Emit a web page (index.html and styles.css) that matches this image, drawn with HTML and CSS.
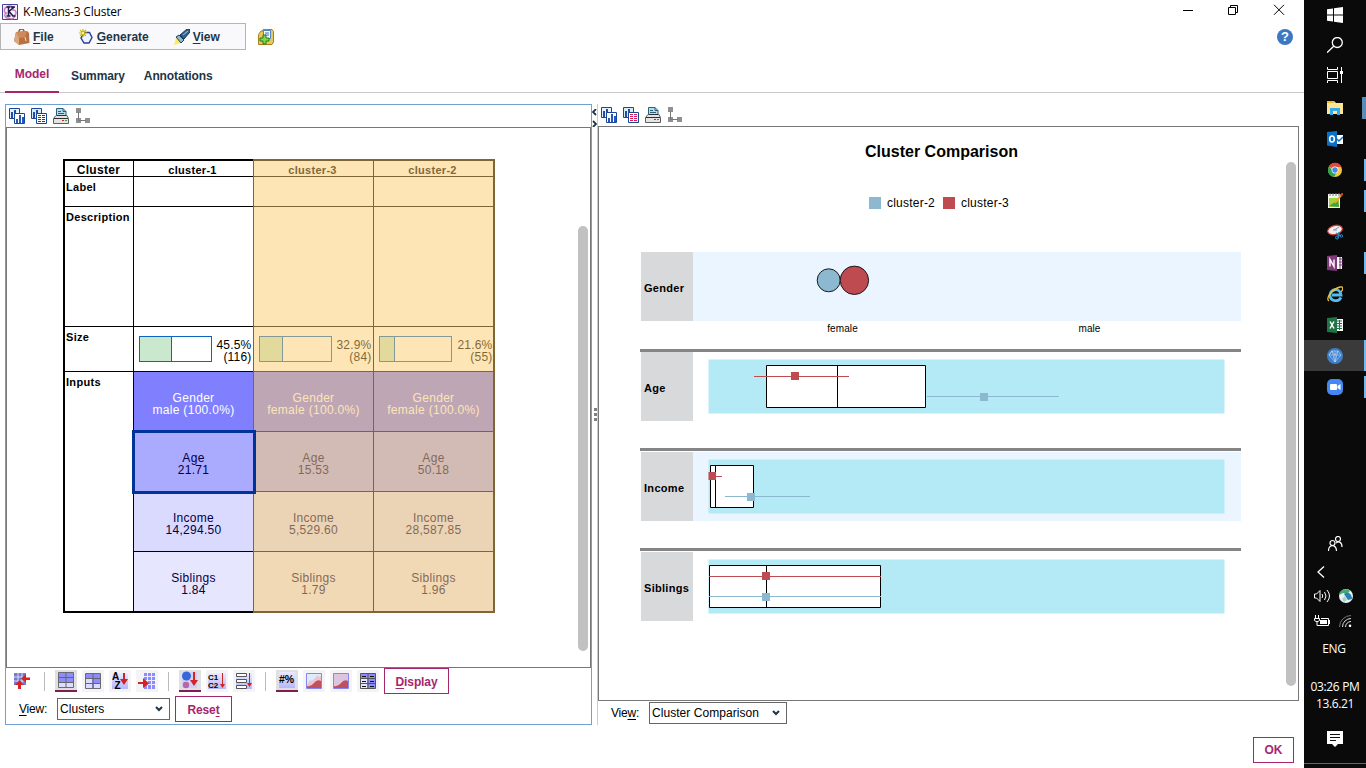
FILE: index.html
```html
<!DOCTYPE html>
<html lang="en">
<head>
<meta charset="utf-8">
<title>K-Means-3 Cluster</title>
<link rel="stylesheet" href="styles.css">
</head>
<body>
<svg class="defs" width="0" height="0">
  <symbol id="i-charts" viewBox="0 0 16 16"><path d="M.5.5h10v10H.5z" fill="#e4f4fa" stroke="#1b4597"/><path d="M2 4h2v6H2zM5 2h2v4H5z" fill="#1f4da8"/><path d="M5.500 5.500h10v10h-10z" fill="#fff" stroke="#1b4597"/><path d="M7 11h2v4H7zM10 7h2v8h-2zM13 9h2v6h-2z" fill="#2359bd"/></symbol>
  <symbol id="i-table-l" viewBox="0 0 16 16"><path d="M.5.5h10v10H.5z" fill="#d4eef4" stroke="#1b4597"/><path d="M2 4h2v6H2zM5 2h2v4H5z" fill="#1f4da8"/><path d="M5.500 5.500h10v10h-10z" fill="#fff" stroke="#17478f"/><path d="M7 7.500h3m1 0h3M7 9.500h3m1 0h3M7 11.500h3m1 0h3M7 13.500h3m1 0h3" stroke="#17478f"/></symbol>
  <symbol id="i-table" viewBox="0 0 16 16"><path d="M.5.5h10v10H.5z" fill="#d4eef4" stroke="#1b4597"/><path d="M2 4h2v6H2zM5 2h2v4H5z" fill="#1f4da8"/><path d="M5.500 5.500h10v10h-10z" fill="#fff" stroke="#17478f"/><path d="M7 7.500h3m1 0h3M7 9.500h3m1 0h3M7 11.500h3m1 0h3M7 13.500h3m1 0h3" stroke="#d0185a"/></symbol>
  <symbol id="i-print" viewBox="0 0 16 16"><path d="M3.500 9V.5H10L13 3.500V9z" fill="#b9dcea" stroke="#23627c"/><path d="M10 .5v3h3M5 3.500h3M5 5.500h6" fill="none" stroke="#286078"/><path d="M3 7.500h11l1.500 3v5H.5v-5z" fill="#e4e4e4" stroke="#5e5e5e"/><path d="M4 7.500h9M1 10.500h14" stroke="#303030"/><path d="M9 12h2v1H9z" fill="#d22"/><path d="M12 12h2v1h-2z" fill="#2a3"/></symbol>
  <symbol id="i-tree" viewBox="0 0 16 16"><path d="M1 0h5v5H1zM1 10h5v5H1zM10 10h5v5h-5z" fill="#909090"/><path d="M3.500 4v8.500H11" fill="none" stroke="#777"/></symbol>
</svg>
<div class="screen">
<main class="window">
  <header class="titlebar">
    <svg class="app-icon" width="16" height="16" viewBox="0 0 16 16"><path d="M.5.5h15v15H.5z" fill="#f3f0fb" stroke="#45429c"/><path d="M5 3C1 4 2 10 5 9c-4 1-2 6 2 5 3 2 6 0 6-3 2-2 1-5-2-5 1-4-4-5-6-3z" fill="none" stroke="#cc78bd" stroke-width="1.400"/><path d="M4.500 3h4M6.500 3v9m-2 0h4M12 3 7 7.500l4 4.500m-2-9h4m-3 9h3.500" fill="none" stroke="#1c1a40" stroke-width="1.500"/></svg>
    <span class="title">K-Means-3 Cluster</span>
    <span class="controls">
      <svg width="110" height="12" viewBox="0 0 110 12" fill="none" stroke="#000"><path d="M0 6.500h10M45.500 3.500h7v7h-7zM47.500 3V1.500h7v7H53M91 .8l10 10m0-10-10 10"/></svg>
    </span>
  </header>
  <div class="menu-row">
    <nav class="menu">
      <span class="menu-item file"><svg width="16" height="16" viewBox="0 0 16 16"><path d="M5 3c0-4 5-4 5 0" fill="none" stroke="#9b6038" stroke-width="1.500"/><path d="M2 3 13 2l2 2 .5 10L5 16 0 12z" fill="#b97143"/><path d="M2 3 0 12l5 4V6z" fill="#dca77d"/><path d="m2 3 11-1-2 6-6 1z" fill="#cd8a5b"/><path d="m11 8 1 4" stroke="#fce28c"/></svg><span><u>F</u>ile</span></span>
      <span class="menu-item gen"><svg width="16" height="16" viewBox="0 0 16 16"><path d="M5.500 3.500h5l2.500 5-3 5.500H5L2 9z" fill="#eef4ff" stroke="#2b3f94" stroke-width="1.400"/><path d="M4 0v8M0 4h8M1 1l6 6m0-6L1 7" stroke="#c9b816" stroke-width="1.200"/><path d="M3 3h2v2H3z" fill="#fff58e"/></svg><span><u>G</u>enerate</span></span>
      <span class="menu-item view"><svg width="16" height="16" viewBox="0 0 16 16"><path d="m2 9-2 7 7-2z" fill="#ffec55"/><path d="m2 8 3-2 5 5-3 3z" fill="#8fb8d0" stroke="#263e58"/><path d="m6 6 7-6h3v3l-6 7z" fill="#2f628e" stroke="#1c3552"/><path d="m9 6 5-4" stroke="#9fc6e4"/></svg><span><u>V</u>iew</span></span>
    </nav>
    <svg class="folder" width="16" height="16" viewBox="0 0 16 16"><path d="M.5 5.500 3 2h2V.5h9l1.500 2V13L14 15.500H.5z" fill="#e8c95c" stroke="#a87f1d"/><path d="M5.500 1.500h7v8h-7z" fill="#f3f9ff" stroke="#4e85c4"/><path d="M7 4h4M7 6h4" stroke="#3b75b7"/><path d="M5 6h3v3h3v3H8v3H5v-3H2V9h3z" fill="#7fd84a" stroke="#267b1c"/></svg>
    <span class="help">?</span>
  </div>
  <nav class="tabs"><span class="tab on">Model</span><span class="tab t2">Summary</span><span class="tab t3">Annotations</span></nav>

  <div class="panes">
    <section class="pane left">
      <div class="tools"><svg><use href="#i-charts"/></svg><svg><use href="#i-table-l"/></svg><svg><use href="#i-print"/></svg><svg><use href="#i-tree"/></svg></div>
      <div class="canvas">
        <div class="grid">
          <div class="c h first">Cluster</div><div class="c h">cluster-1</div><div class="c h">cluster-3</div><div class="c h end">cluster-2</div>
          <div class="c n">Label</div><div class="c"></div><div class="c"></div><div class="c end"></div>
          <div class="c n">Description</div><div class="c"></div><div class="c"></div><div class="c end"></div>
          <div class="c n">Size</div>
          <div class="c size"><span class="bar"><i style="width:31px"></i></span><span>45.5%<br>(116)</span></div>
          <div class="c size"><span class="bar"><i style="width:22px"></i></span><span>32.9%<br>(84)</span></div>
          <div class="c size end"><span class="bar"><i style="width:14px"></i></span><span>21.6%<br>(55)</span></div>
          <div class="c n inputs">Inputs</div>
          <div class="c v k1">Gender<br>male (100.0%)</div><div class="c v k1">Gender<br>female (100.0%)</div><div class="c v k1 end">Gender<br>female (100.0%)</div>
          <div class="c v k2 sel">Age<br>21.71</div><div class="c v k2">Age<br>15.53</div><div class="c v k2 end">Age<br>50.18</div>
          <div class="c v k3">Income<br>14,294.50</div><div class="c v k3">Income<br>5,529.60</div><div class="c v k3 end">Income<br>28,587.85</div>
          <div class="c v k4">Siblings<br>1.84</div><div class="c v k4">Siblings<br>1.79</div><div class="c v k4 end">Siblings<br>1.96</div>
          <div class="shade"></div>
        </div>
        <div class="scroll"></div>
      </div>
      <div class="actions">
        <svg class="pin" width="18" height="16" viewBox="0 0 18 16"><path d="M1 0h12v12H1z" fill="#777bc8"/><path d="M5 0v12M9 0v12M1 4h12M1 8h12" stroke="#d9d9ff"/><path d="M17 4.500h-4V1L8 5.500l5 4.500V7h4zM5 16v-4H2l4.500-5 4.500 5H8v4z" fill="#d52222"/></svg>
        <i class="sep"></i>
        <span class="ib on"><svg width="16" height="16" viewBox="0 0 16 16"><path d="M.5.5h15v15H.5z" fill="#8c8cff" stroke="#6b6b75"/><path d="M1 11h14v4H1z" fill="#ddf"/><path d="M8 0v16M0 5.500h16M0 10.500h16" stroke="#666"/></svg></span>
        <span class="ib"><svg width="16" height="16" viewBox="0 0 16 16"><path d="M.5.5h15v15H.5z" fill="#8c8cff" stroke="#6b6b75"/><path d="M1 6h6v4H1zM1 11h6v4H1zM9 11h6v4H9z" fill="#ddf"/><path d="M8 0v16M0 5.500h16M0 10.500h16" stroke="#666"/></svg></span>
        <span class="ib"><svg class="tint" width="16" height="16" viewBox="0 0 16 16"><text x="0" y="7" class="az">A</text><text x="2.500" y="16" class="az">Z</text><path d="M11 0h2v6h3l-4 6-4-6h3z" fill="#cf2222"/></svg></span>
        <span class="ib"><svg width="18" height="18" viewBox="0 0 18 18"><path d="M6 1h11v16H6z" fill="#8c8cff"/><path d="M9.500 1v16M13.500 1v16M6 4.500h11M6 8.500h11M6 12.500h11" stroke="#eef"/><path d="M0 10h5V6l6 5.500L5 16v-4H0z" fill="#d52222"/></svg></span>
        <i class="sep"></i>
        <span class="ib on"><svg width="18" height="18" viewBox="0 0 18 18"><path d="M1 1h15v16H1z" fill="#d0d0f5"/><circle cx="5.500" cy="5" r="4.500" fill="#3467da"/><circle cx="5" cy="14" r="3.200" fill="#b965aa"/><path d="M12 1h2v8h3l-4 6-4-6h3z" fill="#d52222"/></svg></span>
        <span class="ib"><svg class="tint" width="18" height="16" viewBox="0 0 18 16"><text x="0" y="7" class="c12">C1</text><text x="0" y="15" class="c12">C2</text><path d="M14.500 0v13" stroke="#cf2222"/><path d="m12 11 2.500 4 2.500-4z" fill="#cf2222"/></svg></span>
        <span class="ib"><svg class="tint" width="16" height="16" viewBox="0 0 16 16"><path d="M.5.5h10v3H.5zM.5 6.500h10v3H.5zM.5 12.500h10v3H.5z" fill="#fff" stroke="#555"/><path d="M13.500 0v12" stroke="#cf2222"/><path d="m11 10 2.500 4L16 10z" fill="#cf2222"/></svg></span>
        <i class="sep"></i>
        <span class="ib on"><svg class="tint" width="16" height="16" viewBox="0 0 16 16"><text x="0" y="11" class="num">#%</text></svg></span>
        <span class="ib"><svg width="16" height="16" viewBox="0 0 16 16"><path d="M.5.5h15v15H.5z" fill="#dfeafa"/><path d="m1 12 3-5 2 1 6-6 1 2 2-1v12H1z" fill="#e9c4d5"/><path d="M1 15v-2q4 1 7-3t7-2v7z" fill="#c0505c"/><path d="M.5.5h15v15H.5z" fill="none" stroke="#8585f8"/></svg></span>
        <span class="ib"><svg width="16" height="16" viewBox="0 0 16 16"><path d="M.5.5h15v15H.5z" fill="#ddc5e0"/><path d="M1 15v-2q4 1 7-3t7-2v7z" fill="#c0505c"/><path d="M.5.5h15v15H.5z" fill="none" stroke="#8585f8"/></svg></span>
        <span class="ib"><svg width="16" height="16" viewBox="0 0 16 16"><path d="M.5.5h15v15H.5z" fill="#8c8cff" stroke="#555"/><path d="M1 6h6v4H1zM1 11h6v4H1z" fill="#e6e6ff"/><path d="M8 0v16M0 5.500h16M0 10.500h16" stroke="#555"/><path d="M2 3.500h4m4 0h4M2 8.500h4m4 0h4M2 13.500h4m4 0h4" stroke="#111"/></svg></span>
        <button class="btn display"><span><u>D</u>isplay</span></button>
      </div>
      <div class="viewbar"><span class="vl"><u>V</u>iew:</span><span class="select s1">Clusters<svg width="8" height="6" viewBox="0 0 8 6"><path d="m1 1 3 3 3-3" fill="none" stroke="#1d3649" stroke-width="2"/></svg></span><button class="btn reset"><span>Rese<u>t</u></span></button></div>
    </section>
    <div class="divider">
      <svg width="5" height="18" viewBox="0 0 5 18" fill="none" stroke="#1d3649" stroke-width="1.800"><path d="M4 0 1 3l3 3M1 12l3 3-3 3"/></svg>
      <span class="grip"><i></i><i></i><i></i></span>
    </div>
    <section class="pane right">
      <div class="tools"><svg><use href="#i-charts"/></svg><svg><use href="#i-table"/></svg><svg><use href="#i-print"/></svg><svg><use href="#i-tree"/></svg></div>
      <div class="canvas">
        <h1>Cluster Comparison</h1>
        <div class="legend"><i class="sw blue"></i><span>cluster-2</span><i class="sw red"></i><span>cluster-3</span></div>
        <div class="rows">
          <div class="row"><b>Gender</b><svg class="plot tinted" viewBox="693 252 548 69"><circle cx="828.700" cy="280.300" r="11.500" fill="#8cb8d0" stroke="#1a1a1a"/><circle cx="854.400" cy="280.300" r="14.200" fill="#be4b50" stroke="#1a1a1a"/></svg></div>
          <div class="axis"><span>female</span><span>male</span></div>
          <div class="row"><b>Age</b><svg class="plot" viewBox="693 352 548 69"><path d="M708.500 359.500h516v54h-516z" fill="#b4e9f6"/><path d="M766.500 365.500h159v42h-159zM837.500 365.500v42" fill="#fff" stroke="#000"/><path d="M754 376.500h95" stroke="#be4b50"/><path d="M791 372h8v8h-8z" fill="#be4b50"/><path d="M927 396.500h132" stroke="#8cb8d0"/><path d="M980 393h8v8h-8z" fill="#8cb8d0"/></svg></div>
          <div class="row"><b>Income</b><svg class="plot tinted" viewBox="693 452 548 69"><path d="M708.500 459.500h516v54h-516z" fill="#b4e9f6"/><path d="M710.500 465.500h43v42h-43zM715.500 465.500v42" fill="#fff" stroke="#000"/><path d="M712 476.500h10" stroke="#be4b50"/><path d="M708.500 472h7.500v8h-7.500z" fill="#be4b50"/><path d="M725 496.500h85" stroke="#8cb8d0"/><path d="M747 493h8v8h-8z" fill="#8cb8d0"/></svg></div>
          <div class="row"><b>Siblings</b><svg class="plot" viewBox="693 552 548 69"><path d="M708.500 559.500h516v54h-516z" fill="#b4e9f6"/><path d="M709.500 565.500h171v42h-171zM766.500 565.500v42" fill="#fff" stroke="#000"/><path d="M709 576.500h172" stroke="#be4b50"/><path d="M762 572h8v8h-8z" fill="#be4b50"/><path d="M709 596.500h172" stroke="#8cb8d0"/><path d="M762 593h8v8h-8z" fill="#8cb8d0"/></svg></div>
        </div>
        <div class="scroll"></div>
      </div>
      <div class="viewbar"><span class="vl">Vie<u>w</u>:</span><span class="select s2">Cluster Comparison<svg width="8" height="6" viewBox="0 0 8 6"><path d="m1 1 3 3 3-3" fill="none" stroke="#1d3649" stroke-width="2"/></svg></span></div>
    </section>
  </div>
  <footer><button class="btn ok">OK</button></footer>
</main>

<aside class="taskbar">
  <span class="tb"><svg viewBox="0 0 16 16"><path d="M0 2.300 6 1.400v6.100H0zM7 1.200 16 0v7.500H7zM0 8.500h6v6.100l-6-.9zM7 8.500h9V16l-9-1.200z" fill="#fff"/></svg></span>
  <span class="tb"><svg viewBox="0 0 16 16" fill="none" stroke="#fff" stroke-width="1.300"><circle cx="10.300" cy="5.500" r="5"/><path d="M6.700 9.200 0 15.700"/></svg></span>
  <span class="tb"><svg viewBox="0 0 16 16" fill="none" stroke="#fff"><path d="M.5 0v2.500h10V0M.5 4.500h10v7H.5zM.5 16v-2.500h10V16M14.500 0v16"/><path d="M13 4h3v3h-3z" fill="#fff" stroke="none"/></svg></span>
  <span class="tb run wide"><svg viewBox="0 0 16 16"><path d="M0 1h7l2 2h7v11H0z" fill="#ffe596"/><path d="M0 1h7v2H0z" fill="#f3bd32"/><path d="M3 8h10v7h-3v-4H6v4H3z" fill="#35ace8"/></svg></span>
  <span class="tb"><svg viewBox="0 0 16 16"><path d="M9 4h7v9H9z" fill="#fff"/><path d="m10 8 2 2 4-4" fill="none" stroke="#0a71c8" stroke-width="1.500"/><path d="m0 1 10-1v16L0 14.500z" fill="#0a71c8"/><ellipse cx="5" cy="8" rx="2.300" ry="3" fill="none" stroke="#fff" stroke-width="1.600"/></svg></span>
  <span class="tb run"><svg viewBox="0 0 16 16"><circle cx="8" cy="8" r="7" fill="#f5c737"/><path d="M8 8 2 4.400A7 7 0 0 1 14.500 5H8z" fill="#dd4c3d"/><path d="M2 4.400A7 7 0 0 0 7 15l3-5-4-1z" fill="#2ba458"/><circle cx="8" cy="8" r="3.400" fill="#fff"/><circle cx="8" cy="8" r="2.700" fill="#4487ee"/></svg></span>
  <span class="tb run"><svg viewBox="0 0 16 16"><path d="M1 1h12v14H1z" fill="#f7f7ef"/><path d="M2 5h10v9H2z" fill="#a5d33c"/><path d="m2 13 9-6 1 7z" fill="#41a24a"/><path d="M3 0v3M6 0v3M9 0v3M12 0v3" stroke="#777"/><path d="m8 10 7-9" stroke="#f1a829" stroke-width="2"/><path d="m14 3 2-3" stroke="#d73a36" stroke-width="2"/></svg></span>
  <span class="tb"><svg viewBox="0 0 16 16"><ellipse cx="8" cy="6" rx="7.500" ry="4.500" transform="rotate(-15 8 6)" fill="#eee" stroke="#c53b3b" stroke-width="1.200"/><path d="m7 6 5-3M6 6h4" stroke="#999"/><path d="m9 9 5 3m-3 2 1-6" stroke="#278cc7" stroke-width="1.300"/><circle cx="10" cy="13.500" r="1.500" fill="none" stroke="#278cc7"/><circle cx="14.300" cy="12" r="1.300" fill="none" stroke="#278cc7"/></svg></span>
  <span class="tb run"><svg viewBox="0 0 16 16"><path d="M9 2h6v12H9z" fill="#fff"/><path d="M12 4h4M12 7h4M12 10h4M13 2v12" stroke="#80397b"/><path d="m0 1 10-1v16L0 15z" fill="#80397b"/><path d="M3 11.500v-7l4 7v-7" fill="none" stroke="#fff" stroke-width="1.400"/></svg></span>
  <span class="tb"><svg viewBox="0 0 16 16"><path d="M14 11.500C11 17 3 15 3 9s10-8 11 0H5" fill="none" stroke="#52bbef" stroke-width="2.800"/><path d="M2 15C-2 13 5 3 13 1c4-1 3 3 1 5" fill="none" stroke="#f3c334" stroke-width="1.300"/></svg></span>
  <span class="tb"><svg viewBox="0 0 16 16"><path d="M9 2h7v12H9z" fill="#fff"/><path d="M10 4h5M10 6.500h5M10 9h5M10 11.500h5M12.500 3v10" stroke="#217346"/><path d="m0 1 10-1v16L0 15z" fill="#217346"/><path d="m3 4.500 4 7m0-7-4 7" stroke="#fff" stroke-width="1.500"/></svg></span>
  <span class="tb run active"><svg viewBox="0 0 16 16"><circle cx="8" cy="8" r="8" fill="#3e7fcb"/><path d="M5 3h6l3 4-6 7-6-7zM2 7h12M5 3l3 11 3-11M8 3v11M5 3 2 7m3-4 3 4 3-4" fill="none" stroke="#bfdcf7" stroke-width=".6"/></svg></span>
  <span class="tb run"><svg viewBox="0 0 16 16"><rect width="16" height="16" rx="5" fill="#4389f5"/><rect x="3" y="5" width="7" height="6" rx="1" fill="#fff"/><path d="m10.500 7 3-2v6l-3-2z" fill="#fff"/></svg></span>
  <div class="tray">
    <svg class="people" width="15" height="15" viewBox="0 0 15 15" fill="none" stroke="#fff" stroke-width="1.200"><circle cx="4.500" cy="7" r="2.500"/><path d="M.5 15c0-7 8-7 8 0"/><circle cx="10" cy="3" r="2.500"/><path d="M8 7c3-2 6-1 6 4"/></svg>
    <svg class="chev" width="8" height="12" viewBox="0 0 8 12" fill="none" stroke="#fff" stroke-width="1.300"><path d="M7 .5 1 6l6 5.500"/></svg>
    <div class="pair"><svg width="17" height="14" viewBox="0 0 17 14" fill="none" stroke="#fff"><path d="M.5 5h2L6 1.500v11L2.500 9h-2zM8 5q1.500 2 0 4M10.500 3q3 4 0 8M13 1q5 6 0 12"/></svg><svg width="14" height="14" viewBox="0 0 14 14"><circle cx="7" cy="7" r="7" fill="#e9f3f2"/><path d="M0 6C1 0 8-1 11 2L8 5 4 4z" fill="#45aa71"/><path d="M5 5c4-3 8 0 8 5l-4 1z" fill="#2582b4"/><path d="m3 10 3-3 2 4-3 2z" fill="#a4d3d0"/></svg></div>
    <div class="pair p2"><svg width="17" height="12" viewBox="0 0 17 12" fill="none" stroke="#fff"><path d="M1.500 0v3m3-3v3M.5 3.500h5v2l-1.500 1h-2l-1.500-1zM3 6v4.500h11.500v-7H7"/><path d="M6 5h7v4H6zM15 5h1v4h-1z" fill="#fff" stroke="none"/></svg><svg width="13" height="12" viewBox="0 0 13 12" fill="none" stroke="#ddd"><path d="M.5 12A11.500 11.500 0 0 1 12 .5" stroke="#777"/><path d="M3.500 12A8.500 8.500 0 0 1 12 3.500M6.500 12A5.500 5.500 0 0 1 12 6.500"/><circle cx="11" cy="10.800" r="1.300" fill="#fff" stroke="none"/></svg></div>
    <span class="lang">ENG</span>
    <span class="clock">03:26 PM<br>13.6.21</span>
    <svg class="note" width="16" height="16" viewBox="0 0 16 16"><path d="M0 0h16v13h-5l-3 3-3-3H0z" fill="#fff"/><path d="M3 3.500h10M3 6.500h10M3 9.500h6" stroke="#111"/></svg>
    <i class="desk"></i>
  </div>
</aside>
</div>
</body>
</html>
```
FILE: styles.css
```css
* { box-sizing: border-box; }
body { margin: 0; background: #fff; font: 12px "Liberation Sans", Arial, sans-serif; color: #000; }
svg { display: block; flex: none; }
.defs { position: absolute; }
.screen { display: flex; width: 1366px; height: 768px; overflow: hidden; }
.window { width: 1304px; display: flex; flex-direction: column; }
u { text-decoration: underline; text-underline-offset: 2px; text-decoration-thickness: 1px; }

.titlebar { height: 23px; display: flex; align-items: center; padding-left: 2px; flex: none; }
.title { font: 12px/16px "Open Sans", sans-serif; margin-left: 5px; letter-spacing: -.2px; }
.controls { margin: -3px 11px 0 auto; }
.menu-row { height: 28px; display: flex; flex: none; }
.menu { width: 246px; height: 27px; border: 1px solid #b5b5b5; background: #f9f9fb; display: flex; align-items: center; color: #1d3649; font-weight: bold; }
.menu-item { display: flex; align-items: center; gap: 3px; }
.menu-item span { padding-top: 1px; }
.file { margin-left: 13px; }
.gen { margin-left: 25px; gap: 2px; }
.view { margin-left: 25px; gap: 3px; }
.folder { margin: 6px 0 0 12px; }
.help { width: 16px; height: 16px; border-radius: 50%; background: #3c78c2; color: #fff; font: bold 13px/16px "Liberation Sans", sans-serif; text-align: center; margin: 6px 11px 0 auto; }
.tabs { height: 42px; margin-bottom: 11px; border-bottom: 1px solid #c8c8c8; display: flex; color: #1d3649; font-weight: bold; flex: none; }
.tab { height: 42px; line-height: 50px; letter-spacing: -.12px; }
.tab.on { width: 54px; margin-left: 5px; text-align: center; line-height: 46px; letter-spacing: 0; color: #a6266e; border-bottom: 2px solid #a6266e; }
.t2 { margin-left: 12px; }
.t3 { margin-left: 19px; }

.panes { display: flex; height: 621px; padding-left: 5px; flex: none; }
.pane { display: flex; flex-direction: column; }
.left { width: 587px; border: 1px solid #71a1d1; }
.right { width: 701px; }
.tools { display: flex; gap: 6px; height: 22px; padding: 3px 0 0 3px; flex: none; }
.tools svg { width: 16px; height: 16px; }
.canvas { display: flex; border: 1px solid #777; flex: none; position: relative; }
.left .canvas { width: 585px; height: 541px; padding: 31px 0 0 56px; align-items: flex-start; }
.scroll { width: 10px; background: #c1c1c1; border-radius: 5px; position: absolute; }
.left .scroll { right: 2px; top: 98px; height: 425px; }

.grid { position: relative; width: 432px; height: 454px; border: 2px solid #000; display: grid; grid-template-columns: 69px 120px 120px 119px; grid-template-rows: 16px 30px 120px 45px 60px 60px 60px 59px; }
.c { border-right: 1px solid #000; border-bottom: 1px solid #000; font-size: 12px; line-height: 12px; letter-spacing: .3px; }
.c.end { border-right: 0; }
.h { text-align: center; font-weight: bold; font-size: 11px; line-height: 18px; }
.h:not(.first) { padding-right: 2px; }
.first { font-size: 12px; padding-right: 1px; }
.n { font-weight: bold; font-size: 11px; padding: 4px 0 0 1px; }
.c.inputs { grid-row: 5 / 9; border-bottom: 0; }
.size { display: flex; justify-content: space-between; padding: 9px 2px 0 5px; text-align: right; }
.size > span:last-child { padding-top: 3px; margin-right: -.5px; letter-spacing: .2px; }
.size.end { padding-right: 1px; }
.bar { width: 73px; height: 26px; border: 1px solid #0a66c2; display: flex; }
.bar i { background: #c9e8cd; border-right: 1px solid #0a66c2; box-sizing: content-box; }
.v { text-align: center; padding-top: 20px; color: #000048; }
.k1 { background: #8080ff; color: #fff; }
.k2 { background: #aaaaff; }
.k3 { background: #dadaff; }
.k4 { background: #e6e6ff; border-bottom: 0; }
.sel { outline: 3px solid #003399; outline-offset: -1px; position: relative; z-index: 3; }
.shade { position: absolute; z-index: 2; left: 188px; top: -2px; width: 242px; height: 454px; background: rgba(252, 204, 107, .5); }

.actions { display: flex; height: 26px; padding-left: 7px; align-items: center; flex: none; }
.pin { margin-right: 12px; width: 18px; }
.sep { width: 1px; height: 19px; background: #bbb; margin-left: 1px; }
.sep + .ib { margin-left: 10px; }
.ib { width: 22px; height: 22px; margin-right: 5px; background: #f4f4f6; display: flex; align-items: center; justify-content: center; flex: none; }
.ib + .sep { margin-left: 5px; }
.ib.on { background: #e0e0e0; border-bottom: 2px solid #7d1c56; }
.tint { background: linear-gradient(#eaeaff, #b7b7fa); overflow: visible; }
.az { font: bold 10px "Liberation Sans", sans-serif; }
.c12 { font: bold 8px "Liberation Sans", sans-serif; }
.num { font: bold 10.5px "Liberation Sans", sans-serif; }
.btn { border: 1px solid #a6266e; background: #fff; color: #a6266e; font: bold 12px "Liberation Sans", Arial, sans-serif; padding: 0; letter-spacing: -.1px; }
.display { width: 65px; height: 26px; }
.btn span { position: relative; top: .5px; }
.viewbar { display: flex; align-items: center; }
.left .viewbar { height: 30px; padding-left: 13px; }
.right .viewbar { height: 22px; padding: 1px 0 0 13px; }
.vl { width: 38px; letter-spacing: -.2px; }
.select { height: 22px; border: 1px solid #666; display: flex; align-items: center; justify-content: space-between; padding: 0 6px 0 2px; letter-spacing: .05px; }
.s1 { width: 113px; }
.s2 { width: 138px; }
.reset { width: 57px; height: 26px; margin-left: 5px; }

.divider { width: 6px; border-right: 1px solid #ccc; padding: 5px 0 0 0; display: flex; flex-direction: column; flex: none; }
.grip { margin: 281px 0 0 2px; display: flex; flex-direction: column; gap: 2px; }
.grip i { width: 3px; height: 3px; background: #808080; }

.right .canvas { width: 701px; height: 575px; flex-direction: column; padding: 0 0 0 41px; }
h1 { font-size: 16px; line-height: 20px; margin: 15px 0 0; width: 603px; text-align: center; }
.legend { display: flex; align-items: center; height: 14px; margin: 34px 0 0 229px; letter-spacing: .22px; }
.legend span { margin-left: 6px; }
.sw { width: 12px; height: 12px; }
.blue { background: #8cb8d0; }
.red { background: #be4b50; margin-left: 8px; }
.rows { margin-top: 42px; width: 601px; }
.row { display: flex; height: 69px; padding-left: 1px; }
.row b { width: 52px; background: #d8d9db; padding: 30px 0 0 3px; font-size: 11px; line-height: 13px; letter-spacing: .3px; flex: none; }
.plot { width: 548px; height: 69px; }
.tinted { background: #ebf5ff; }
.row + .row { padding-top: 31px; height: 100px; position: relative; }
.row + .row::before { content: ""; position: absolute; left: 0; right: 0; top: 27px; height: 3px; background: #858585; }
.axis { height: 31px; border-bottom: 3px solid #858585; display: flex; font-size: 10px; letter-spacing: .1px; padding: 2px 0 0 79px; }
.axis span { width: 247px; text-align: center; }
.right .scroll { right: 2px; top: 35px; height: 524px; }
footer { display: flex; justify-content: flex-end; padding: 12px 10px 0 0; }
.ok { width: 41px; height: 26px; }

.taskbar { width: 62px; background: #0a0a0a; display: flex; flex-direction: column; color: #fff; }
.tb { height: 31px; display: flex; align-items: center; justify-content: center; position: relative; flex: none; }
.tb:nth-child(-n+3) { height: 30px; }
.tb:nth-child(4) { margin-top: 2px; }
.tb svg { width: 16px; height: 16px; }
.run::after { content: ""; position: absolute; right: 0; top: 5px; width: 2px; height: 22px; background: #76b9ed; }
.wide::after { width: 4px; background: #5c8cb4; }
.active { background: #3a3a3b; }
.active::after { top: 0; height: 31px; }
.tray { flex: 1; display: flex; flex-direction: column; align-items: center; padding-top: 134px; font: 12px/17px "Open Sans", sans-serif; }
.chev { margin: 15px 29px 0 0; }
.pair { display: flex; align-items: center; gap: 8px; margin: 11px 4px 0 0; }
.p2 { margin-top: 12px; }
.lang { margin-top: 13px; letter-spacing: -.3px; margin-right: 2px; }
.clock { text-align: center; margin-top: 21px; letter-spacing: -.35px; white-space: nowrap; }
.note { margin-top: 19px; }
.desk { width: 62px; height: 1px; background: #666; margin: auto 0 4px; }
```
